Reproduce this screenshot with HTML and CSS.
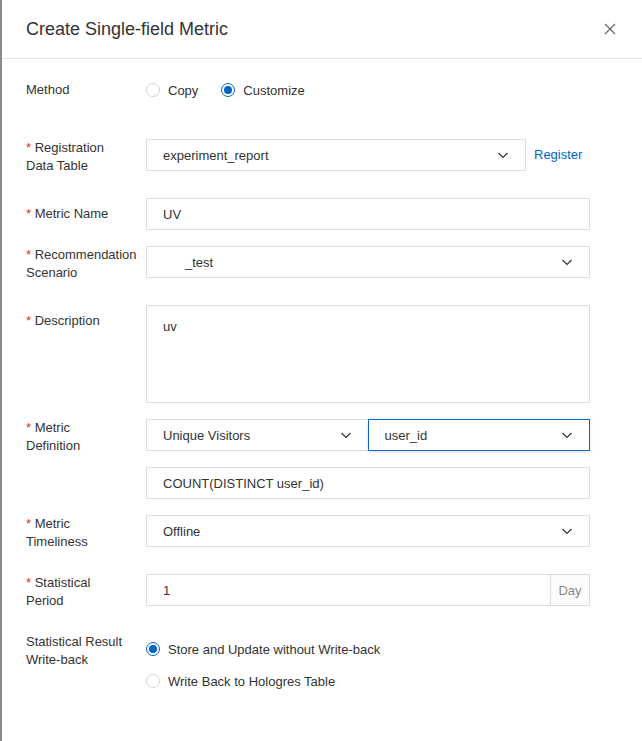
FILE: index.html
```html
<!DOCTYPE html>
<html lang="en">
<head>
  <meta charset="UTF-8" />
  <meta name="viewport" content="width=device-width, initial-scale=1.0" />
  <title>Create Single-field Metric</title>
  <link rel="stylesheet" href="styles.css">
</head>
<body>
  <div class="dialog">
    <div class="dialog-header">
      <h1 class="dialog-title">Create Single-field Metric</h1>
      <span class="dialog-close">
        <svg width="12" height="12" viewBox="0 0 12 12"><path d="M1 1 L11 11 M11 1 L1 11" stroke="#666" stroke-width="1.2" fill="none"/></svg>
      </span>
    </div>

    <div class="dialog-body">
      <div class="form-item method-item">
        <div class="form-label single">Method</div>
        <div class="form-control">
          <div class="radio-group inline">
            <span class="radio"><span class="radio-dot"></span>Copy</span>
            <span class="radio"><span class="radio-dot checked"></span>Customize</span>
          </div>
        </div>
      </div>

      <div class="form-item">
        <div class="form-label double"><span class="req">*</span> Registration<br>Data Table</div>
        <div class="form-control with-link">
          <div class="select">
            <span>experiment_report</span>
            <svg class="chevron" width="12" height="12" viewBox="0 0 12 12"><path d="M1.5 4 L6 8.5 L10.5 4" stroke="#333" stroke-width="1.2" fill="none"/></svg>
          </div>
          <a class="link" href="#">Register</a>
        </div>
      </div>

      <div class="form-item">
        <div class="form-label single"><span class="req">*</span> Metric Name</div>
        <div class="form-control">
          <div class="input">UV</div>
        </div>
      </div>

      <div class="form-item">
        <div class="form-label double"><span class="req">*</span> Recommendation<br>Scenario</div>
        <div class="form-control">
          <div class="select">
            <span><span class="blank"></span>_test</span>
            <svg class="chevron" width="12" height="12" viewBox="0 0 12 12"><path d="M1.5 4 L6 8.5 L10.5 4" stroke="#333" stroke-width="1.2" fill="none"/></svg>
          </div>
        </div>
      </div>

      <div class="form-item">
        <div class="form-label single"><span class="req">*</span> Description</div>
        <div class="form-control">
          <div class="textarea">uv</div>
        </div>
      </div>

      <div class="form-item">
        <div class="form-label double"><span class="req">*</span> Metric<br>Definition</div>
        <div class="form-control stack">
          <div class="split">
            <div class="select">
              <span>Unique Visitors</span>
              <svg class="chevron" width="12" height="12" viewBox="0 0 12 12"><path d="M1.5 4 L6 8.5 L10.5 4" stroke="#333" stroke-width="1.2" fill="none"/></svg>
            </div>
            <div class="select focused">
              <span>user_id</span>
              <svg class="chevron" width="12" height="12" viewBox="0 0 12 12"><path d="M1.5 4 L6 8.5 L10.5 4" stroke="#333" stroke-width="1.2" fill="none"/></svg>
            </div>
          </div>
          <div class="input">COUNT(DISTINCT user_id)</div>
        </div>
      </div>

      <div class="form-item">
        <div class="form-label double"><span class="req">*</span> Metric<br>Timeliness</div>
        <div class="form-control">
          <div class="select">
            <span>Offline</span>
            <svg class="chevron" width="12" height="12" viewBox="0 0 12 12"><path d="M1.5 4 L6 8.5 L10.5 4" stroke="#333" stroke-width="1.2" fill="none"/></svg>
          </div>
        </div>
      </div>

      <div class="form-item">
        <div class="form-label double"><span class="req">*</span> Statistical<br>Period</div>
        <div class="form-control">
          <div class="input-group">
            <div class="input">1</div>
            <span class="addon">Day</span>
          </div>
        </div>
      </div>

      <div class="form-item">
        <div class="form-label double">Statistical Result<br>Write-back</div>
        <div class="form-control">
          <div class="radio-group">
            <span class="radio"><span class="radio-dot checked"></span>Store and Update without Write-back</span>
            <span class="radio"><span class="radio-dot"></span>Write Back to Hologres Table</span>
          </div>
        </div>
      </div>
    </div>
  </div>
</body>
</html>
```

FILE: styles.css
```css
html, body {
  margin: 0;
  padding: 0;
  background: #8a8a8a;
  font-family: "Liberation Sans", Arial, sans-serif;
  color: #333;
}
.dialog {
  margin-left: 2px;
  min-height: 741px;
  background: #fff;
}
.dialog-header {
  height: 58px;
  display: flex;
  align-items: center;
  justify-content: space-between;
  padding: 0 26px 0 24px;
  border-bottom: 1px solid #e3e3e3;
}
.dialog-title {
  margin: 0;
  font-size: 18px;
  font-weight: normal;
  color: #333;
}
.dialog-close {
  display: flex;
  width: 12px;
  height: 12px;
}
.dialog-body {
  padding: 15px 52px 0 24px;
}
.form-item {
  display: grid;
  grid-template-columns: 120px 444px;
  margin-bottom: 16px;
}
.method-item {
  margin-bottom: 33px;
}
.form-label {
  font-size: 13px;
  line-height: 18px;
  color: #333;
}
.form-label.single {
  padding-top: 7px;
}
.form-label.double {
  padding-bottom: 7px;
}
.req {
  color: #d93026;
}
.form-control {
  font-size: 13px;
}
.form-control.with-link {
  display: flex;
  align-items: flex-start;
}
.form-control.stack {
  display: flex;
  flex-direction: column;
  gap: 16px;
}
.select, .input {
  height: 32px;
  box-sizing: border-box;
  border: 1px solid #dcdcdc;
  display: flex;
  align-items: center;
  justify-content: space-between;
  padding: 0 16px;
  background: #fff;
  color: #333;
}
.with-link .select {
  width: 380px;
}
.link {
  margin-left: 8px;
  line-height: 32px;
  color: #0064c8;
  text-decoration: none;
}
.blank {
  display: inline-block;
  width: 22px;
}
.textarea {
  height: 98px;
  box-sizing: border-box;
  border: 1px solid #dcdcdc;
  padding: 12px 16px;
  line-height: 18px;
}
.split {
  display: flex;
}
.split .select {
  flex: 1;
}
.split .select + .select {
  margin-left: -1px;
}
.select.focused {
  border-color: #0064c8;
  box-shadow: 0 1px 3px rgba(0, 0, 0, 0.12);
  position: relative;
}
.input-group {
  display: flex;
}
.input-group .input {
  flex: 1;
}
.addon {
  width: 40px;
  height: 32px;
  box-sizing: border-box;
  margin-left: -1px;
  border: 1px solid #dcdcdc;
  background: #fcfcfc;
  color: #888;
  display: flex;
  align-items: center;
  justify-content: center;
}
.radio-group {
  display: flex;
  flex-direction: column;
}
.radio-group.inline {
  flex-direction: row;
  gap: 23px;
}
.radio {
  display: inline-flex;
  align-items: center;
  gap: 8px;
  height: 32px;
  color: #333;
}
.radio-dot {
  width: 14px;
  height: 14px;
  box-sizing: border-box;
  border: 1px solid #d4d4d4;
  border-radius: 50%;
  display: flex;
  align-items: center;
  justify-content: center;
}
.radio-dot.checked {
  border-color: #0064c8;
}
.radio-dot.checked::after {
  content: "";
  width: 8px;
  height: 8px;
  border-radius: 50%;
  background: #0064c8;
}
```
